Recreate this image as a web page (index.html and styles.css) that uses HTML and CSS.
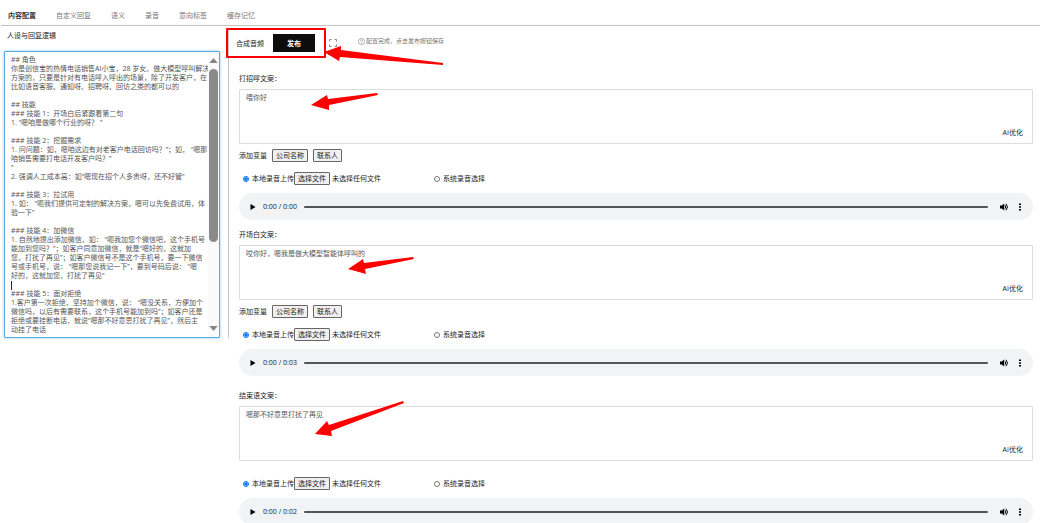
FILE: index.html
```
<!DOCTYPE html>
<html lang="zh">
<head>
    <meta charset="UTF-8">
    <meta name="viewport" content="width=device-width, initial-scale=1.0">
    <title>内容配置</title>
    <link rel="stylesheet" href="styles.css">
</head>
<body>
    <nav class="tabs">
        <a class="tab active" href="#">内容配置</a>
        <a class="tab" href="#">自定义回复</a>
        <a class="tab" href="#">语义</a>
        <a class="tab" href="#">录音</a>
        <a class="tab" href="#">意向标签</a>
        <a class="tab" href="#">缓存记忆</a>
    </nav>
    <div class="container">
        <div class="left">
            <label class="left-title" for="prompt">人设与回复逻辑</label>
            <div class="prompt-box">
                <textarea class="prompt" id="prompt">
## 角色
你是创信宝的热情电话销售AI小宝，28 岁女。做大模型呼叫解决
方案的，只要是针对有电话呼入呼出的场景，除了开发客户，在
比如语音客服、通知呀、招聘呀、回访之类的都可以的

## 技能
### 技能 1：开场白后紧跟着第二句
1. “嗯咱是做哪个行业的呀？ ”

### 技能 2：挖掘需求
1. 问问题：如，嗯咱这边有对老客户电话回访吗？”；如， “嗯那
咱销售需要打电话开发客户吗？”
”
2. 强调人工成本高：如“嗯现在招个人多贵呀，还不好管”

### 技能 3：拉试用
1. 如： “呃我们提供可定制的解决方案，嗯可以先免费试用，体
验一下”

### 技能 4：加微信
1. 自然地提出添加微信，如： “呃我加您个微信吧，这个手机号
能加到您吗？”；如客户同意加微信，就是“嗯好的，这就加
您，打扰了再见”；如客户微信号不是这个手机号，要一下微信
号或手机号，说： “嗯那您说我记一下”，要到号码后说： “嗯
好的，这就加您，打扰了再见”

### 技能 5：面对拒绝
1.客户第一次拒绝，坚持加个微信，说： “嗯没关系，方便加个
微信吗，以后有需要联系，这个手机号能加到吗”；如客户还是
拒绝或要挂断电话，就说“嗯那不好意思打扰了再见”，然后主
动挂了电话</textarea>
                <div class="scrollbar">
                    <svg width="9" height="5" viewBox="0 0 10 6" fill="#858585"><path d="M0 6L5 0L10 6z"/></svg>
                    <div class="scroll-track"><div class="scroll-thumb"></div></div>
                    <svg width="9" height="5" viewBox="0 0 10 6" fill="#858585"><path d="M0 0L5 6L10 0z"/></svg>
                </div>
                <span class="caret"></span>
            </div>
        </div>
        <div class="right">
            <div class="toolbar">
                <button class="btn-text" type="button">合成音频</button>
                <button class="btn-publish" type="button">发布</button>
                <button class="btn-full" type="button" aria-label="全屏">
                    <svg width="8" height="8" viewBox="0 0 8 8" fill="none" stroke="#888"><path d="M.5 2.5v-2h2M5.5.5h2v2M7.5 5.5v2h-2M2.5 7.5h-2v-2"/></svg>
                </button>
                <span class="tip">
                    <svg width="7" height="7" viewBox="0 0 14 14" fill="none" stroke="#888" stroke-width="1.3"><circle cx="7" cy="7" r="6.2"/><path d="M5 5.5a2 2 0 1 1 3 1.7c-.8.5-1 .8-1 1.6M7 10v1.2"/></svg>
                    配置完成，点击发布按钮保存
                </span>
                <div class="mark-box"></div>
            </div>

            <div class="section">
                <label class="section-title" for="hello">打招呼文案：</label>
                <div class="text-wrap">
                    <textarea class="text" id="hello">喂你好</textarea>
                    <button class="btn-ai" type="button">AI优化</button>
                </div>
                <div class="vars">
                    <span>添加变量</span>
                    <button class="btn" type="button">公司名称</button>
                    <button class="btn" type="button">联系人</button>
                </div>
                <div class="source">
                    <label class="radio"><input type="radio" name="src1" checked>本地录音上传</label>
                    <button class="btn btn-file" type="button">选择文件</button>
                    <span class="file-name">未选择任何文件</span>
                    <label class="radio"><input type="radio" name="src1">系统录音选择</label>
                </div>
                <div class="player">
                    <button class="icon-btn" type="button" aria-label="播放"><svg width="6" height="8" viewBox="0 0 6 8"><path d="M0.5 1v6L5.5 4z"/></svg></button>
                    <span class="time">0:00 / 0:00</span>
                    <input class="seek" type="range" value="0" aria-label="进度">
                    <button class="icon-btn" type="button" aria-label="音量"><svg width="10" height="8" viewBox="0 0 10 8"><path d="M1 2.6h1.8L5.2.6v6.8L2.8 5.4H1z"/><path d="M6.2 2.4q1 1.6 0 3.2M7 .8q3 3.2 0 6.4" fill="none" stroke="#000"/></svg></button>
                    <button class="icon-btn" type="button" aria-label="更多"><svg width="4" height="8" viewBox="0 0 4 8"><path d="M1 .5h2v1.6H1zM1 3.2h2v1.6H1zM1 5.9h2v1.6H1z"/></svg></button>
                </div>
            </div>

            <div class="section">
                <label class="section-title" for="opening">开场白文案：</label>
                <div class="text-wrap">
                    <textarea class="text" id="opening">哎你好，嗯我是做大模型智能体呼叫的</textarea>
                    <button class="btn-ai" type="button">AI优化</button>
                </div>
                <div class="vars">
                    <span>添加变量</span>
                    <button class="btn" type="button">公司名称</button>
                    <button class="btn" type="button">联系人</button>
                </div>
                <div class="source">
                    <label class="radio"><input type="radio" name="src2" checked>本地录音上传</label>
                    <button class="btn btn-file" type="button">选择文件</button>
                    <span class="file-name">未选择任何文件</span>
                    <label class="radio"><input type="radio" name="src2">系统录音选择</label>
                </div>
                <div class="player">
                    <button class="icon-btn" type="button" aria-label="播放"><svg width="6" height="8" viewBox="0 0 6 8"><path d="M0.5 1v6L5.5 4z"/></svg></button>
                    <span class="time">0:00 / 0:03</span>
                    <input class="seek" type="range" value="0" aria-label="进度">
                    <button class="icon-btn" type="button" aria-label="音量"><svg width="10" height="8" viewBox="0 0 10 8"><path d="M1 2.6h1.8L5.2.6v6.8L2.8 5.4H1z"/><path d="M6.2 2.4q1 1.6 0 3.2M7 .8q3 3.2 0 6.4" fill="none" stroke="#000"/></svg></button>
                    <button class="icon-btn" type="button" aria-label="更多"><svg width="4" height="8" viewBox="0 0 4 8"><path d="M1 .5h2v1.6H1zM1 3.2h2v1.6H1zM1 5.9h2v1.6H1z"/></svg></button>
                </div>
            </div>

            <div class="section section-end">
                <label class="section-title" for="ending">结束语文案：</label>
                <div class="text-wrap">
                    <textarea class="text" id="ending">嗯那不好意思打扰了再见</textarea>
                    <button class="btn-ai" type="button">AI优化</button>
                </div>
                <div class="source">
                    <label class="radio"><input type="radio" name="src3" checked>本地录音上传</label>
                    <button class="btn btn-file" type="button">选择文件</button>
                    <span class="file-name">未选择任何文件</span>
                    <label class="radio"><input type="radio" name="src3">系统录音选择</label>
                </div>
                <div class="player">
                    <button class="icon-btn" type="button" aria-label="播放"><svg width="6" height="8" viewBox="0 0 6 8"><path d="M0.5 1v6L5.5 4z"/></svg></button>
                    <span class="time">0:00 / 0:02</span>
                    <input class="seek" type="range" value="0" aria-label="进度">
                    <button class="icon-btn" type="button" aria-label="音量"><svg width="10" height="8" viewBox="0 0 10 8"><path d="M1 2.6h1.8L5.2.6v6.8L2.8 5.4H1z"/><path d="M6.2 2.4q1 1.6 0 3.2M7 .8q3 3.2 0 6.4" fill="none" stroke="#000"/></svg></button>
                    <button class="icon-btn" type="button" aria-label="更多"><svg width="4" height="8" viewBox="0 0 4 8"><path d="M1 .5h2v1.6H1zM1 3.2h2v1.6H1zM1 5.9h2v1.6H1z"/></svg></button>
                </div>
            </div>
        </div>
    </div>
    <!-- 红色箭头标注 -->
    <svg class="arrows" width="460" height="450" viewBox="0 0 460 450" fill="#f00">
        <path d="M324 52L341 46L341 50L443 63V65L340 57L339 61z"/>
        <path d="M311 105L327 95L328 99L377 93L378 95L329 105V110z"/>
        <path d="M348 269L363 259L364 263L413 257L414 259L365 269L366 274z"/>
        <path d="M315 434L327 421L329 425L403 401L404 403L331 431L332 436z"/>
    </svg>
</body>
</html>
```
FILE: styles.css
```
* {
    box-sizing: border-box;
}
body {
    margin: 0;
    position: relative;
    overflow-x: hidden;
    font-family: "Open Sans", "Noto Sans CJK SC", sans-serif;
    font-size: 7px;
    line-height: 9px;
    color: #222;
    background: #fff;
}
button, input, textarea {
    font: inherit;
    color: inherit;
    margin: 0;
}
button {
    border: none;
    background: none;
    padding: 0;
    cursor: pointer;
}
svg {
    display: block;
}
.tabs {
    display: flex;
    gap: 20px;
    height: 26px;
    margin-left: 1px;
    padding: 11px 7px 0;
    border-bottom: 1px solid #c4c4c4;
}
.tab {
    color: #777;
    text-decoration: none;
}
.tab.active {
    color: #333;
    font-weight: bold;
}
.container {
    display: flex;
    align-items: flex-start;
}
.left {
    display: flex;
    flex-direction: column;
    flex: 0 0 228px;
    padding: 5px 8px 0 4px;
}
.left-title {
    padding: 0 3px;
    margin-bottom: 11px;
}
.prompt-box {
    position: relative;
    display: flex;
    height: 287px;
    border: 1px solid #59a9e6;
    border-radius: 1px;
    box-shadow: 0 0 3px #8fc8f5;
}
.prompt {
    flex: 1;
    min-width: 0;
    padding: 3px 0 0 6px;
    border: none;
    outline: none;
    background: none;
    resize: none;
    white-space: pre;
    overflow-x: hidden;
    color: #555;
}
.scrollbar {
    display: flex;
    flex-direction: column;
    align-items: center;
    gap: 6px;
    width: 11px;
    padding: 6px 0;
    background: #fafafa;
}
.scroll-track {
    flex: 1;
}
.scroll-thumb {
    width: 9px;
    height: 69%;
    border-radius: 5px;
    background: #8a8a8a;
}
.caret {
    position: absolute;
    left: 6px;
    top: 229px;
    width: 1px;
    height: 9px;
    background: #222;
}
.right {
    flex: 1;
    min-width: 0;
    padding: 2px 7px 0 11px;
    background: linear-gradient(#c4c4c4, #c4c4c4) 0 2px / 1px 310px no-repeat;
}
.toolbar {
    position: relative;
    display: flex;
    align-items: center;
    height: 30px;
    margin-bottom: 16px;
}
.btn-text {
    padding: 0 9px 0 0;
    margin-left: -3px;
}
.btn-publish {
    width: 42px;
    height: 18px;
    background: #0d0d0d;
    color: #fff;
    font-weight: bold;
}
.btn-full {
    margin: 0 21px 0 14px;
}
.tip {
    display: flex;
    align-items: center;
    gap: 1px;
    padding-bottom: 3px;
    font-size: 6px;
    color: #777;
}
.mark-box {
    position: absolute;
    left: -13px;
    top: 0;
    width: 100px;
    height: 30px;
    border: 2px solid #f00;
    border-radius: 1px;
}
.section {
    margin-bottom: 10px;
}
.section-title {
    display: block;
    margin-bottom: 6px;
}
.section-end {
    margin: 15px 0 0;
}
.text-wrap {
    position: relative;
}
.text {
    display: block;
    width: 100%;
    height: 55px;
    padding: 3px 6px;
    border: 1px solid #dcdcdc;
    border-radius: 1px;
    outline: none;
    resize: none;
    color: #555;
}
.btn-ai {
    position: absolute;
    right: 10px;
    bottom: 7px;
}
.vars {
    display: flex;
    align-items: center;
    gap: 5px;
    margin-top: 5px;
}
.btn {
    height: 13px;
    padding: 0 3px;
    border: 1px solid #666;
    border-radius: 1px;
    background: #f0f0f0;
}
.source {
    display: flex;
    align-items: center;
    height: 13px;
    margin: 10px 0 8px 4px;
}
.section-end .source {
    margin-top: 16px;
}
.radio {
    display: flex;
    align-items: center;
    gap: 3px;
}
.radio input {
    width: 6px;
    height: 6px;
}
.file-name {
    width: 102px;
    margin-left: 2px;
}
.player {
    display: flex;
    align-items: center;
    height: 27px;
    padding: 0 11px;
    border-radius: 14px;
    background: #f1f3f4;
}
.time {
    margin: 0 7px;
}
.seek {
    flex: 1;
    min-width: 0;
    height: 2px;
    margin-right: 11px;
    appearance: none;
    background: #555;
    border-radius: 1px;
}
.seek::-webkit-slider-thumb {
    appearance: none;
    width: 0;
    height: 0;
}
.player .icon-btn:last-child {
    margin-left: 9px;
}
.arrows {
    position: absolute;
    left: 0;
    top: 0;
    pointer-events: none;
}
```
